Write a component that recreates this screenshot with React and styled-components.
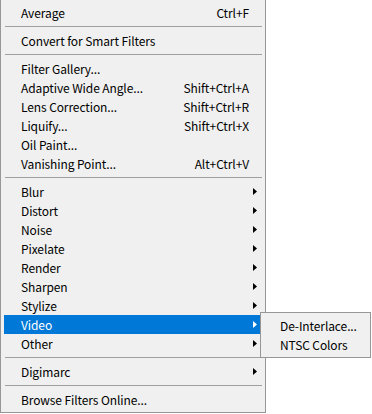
import React from 'react';
import styled, {createGlobalStyle} from 'styled-components';

const GlobalStyle = createGlobalStyle`
  *, *::before, *::after {
    box-sizing: border-box;
  }
  html, body {
    margin: 0;
    padding: 0;
    background: #ffffff;
  }
  body {
    font-family: "Noto Sans CJK KR", "Noto Sans", sans-serif;
    font-size: 12px;
    letter-spacing: -0.1px;
  }
`;

const menu = [
    {label: 'Average', shortcut: 'Ctrl+F'},
    'sep',
    {label: 'Convert for Smart Filters'},
    'sep',
    {label: 'Filter Gallery...'},
    {label: 'Adaptive Wide Angle...', shortcut: 'Shift+Ctrl+A'},
    {label: 'Lens Correction...', shortcut: 'Shift+Ctrl+R'},
    {label: 'Liquify...', shortcut: 'Shift+Ctrl+X'},
    {label: 'Oil Paint...'},
    {label: 'Vanishing Point...', shortcut: 'Alt+Ctrl+V'},
    'sep',
    {label: 'Blur', sub: true},
    {label: 'Distort', sub: true},
    {label: 'Noise', sub: true},
    {label: 'Pixelate', sub: true},
    {label: 'Render', sub: true},
    {label: 'Sharpen', sub: true},
    {label: 'Stylize', sub: true},
    {label: 'Video', sub: true, active: true},
    {label: 'Other', sub: true},
    'sep',
    {label: 'Digimarc', sub: true},
    'sep',
    {label: 'Browse Filters Online...'},
];

const videoItems = ['De-Interlace...', 'NTSC Colors'];

function Arrow({light}) {
    return (
        <svg width="4" height="7" viewBox="0 0 4 7">
            <path d="M0 0 L4 3.5 L0 7 Z" fill={light ? '#ffffff' : '#000000'}/>
        </svg>
    )
}

export default function App() {
    return (
        <Page>
            <GlobalStyle/>
            <Menu>
                {menu.map((item, i) => item === 'sep'
                    ? <Separator key={i}><span/></Separator>
                    : (
                        <Row key={i} $active={item.active}>
                            <Label>{item.label}</Label>
                            <Shortcut>{item.shortcut}</Shortcut>
                            <ArrowCell>{item.sub && <Arrow light={item.active}/>}</ArrowCell>
                            {item.active && (
                                <SubMenu>
                                    {videoItems.map(s => <SubRow key={s}>{s}</SubRow>)}
                                </SubMenu>
                            )}
                        </Row>
                    ))}
            </Menu>
        </Page>
    )
}

const Page = styled.div`
  width: 372px;
  height: 414px;
  position: relative;
  overflow: hidden;
`;

const Menu = styled.div`
  width: 266px;
  border: 1px solid #979797;
  border-top: none;
  background: #f0f0f0;
  padding: 3px 5px 3px 3px;
`;

const Row = styled.div`
  position: relative;
  display: grid;
  grid-template-columns: 1fr auto 11px;
  align-items: center;
  height: 19px;
  padding-left: 17px;
  color: ${p => p.$active ? '#ffffff' : '#000000'};
  background: ${p => p.$active ? '#0078d7' : 'transparent'};
  white-space: nowrap;
`;

const Label = styled.span``;

const Shortcut = styled.span`
  text-align: right;
`;

const ArrowCell = styled.span`
  display: flex;
  align-items: center;
  justify-content: flex-end;
  padding-right: 3px;
`;

const Separator = styled.div`
  height: 9px;
  display: flex;
  align-items: center;
  padding: 0 0 0 1px;
  span {
    display: block;
    flex: 1;
    height: 1px;
    background: #a0a0a0;
    margin-right: -2px;
  }
`;

const SubMenu = styled.div`
  position: absolute;
  left: 256px;
  top: -3px;
  width: 111px;
  border: 1px solid #979797;
  background: #f0f0f0;
  padding: 3px 0 3px 0;
  color: #000000;
`;

const SubRow = styled.div`
  height: 19px;
  display: flex;
  align-items: center;
  padding-left: 19px;
`;
